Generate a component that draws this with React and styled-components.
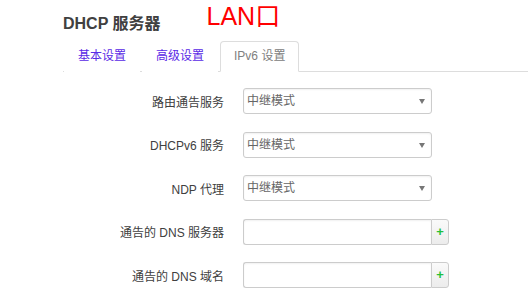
import React from "react";
import styled, { createGlobalStyle } from "styled-components";

const Global = createGlobalStyle`
  html, body { margin: 0; padding: 0; background: #fff; }
  body {
    font-family: "Liberation Sans", "Noto Sans CJK SC", sans-serif;
    color: #404040;
  }
`;

const Page = styled.div`
  width: 528px;
  height: 306px;
  overflow: hidden;
  padding-left: 63px;
  box-sizing: border-box;
`;

const Header = styled.div`
  display: flex;
  align-items: flex-start;
  height: 41px;
`;

const Title = styled.h2`
  margin: 16px 0 0 0;
  font-size: 16px;
  line-height: 16px;
  font-weight: bold;
  color: #404040;
`;

const Note = styled.span`
  margin: 4px 0 0 46px;
  font-size: 25px;
  line-height: 25px;
  color: #ff0000;
`;

const Tabs = styled.ul`
  display: flex;
  list-style: none;
  margin: 0;
  padding: 0 0 0 1px;
  height: 30px;
  border-bottom: 1px solid #ddd;
`;

const Tab = styled.li`
  height: 31px;
  box-sizing: border-box;
  margin: 0 2px -1px 0;
  padding: 0 13px;
  border: 1px solid ${(p) => (p.$active ? "#ddd" : "transparent")};
  border-bottom-color: transparent;
  border-radius: 4px 4px 0 0;
  background: #fff;
  font-size: 12px;
  line-height: 29px;
  color: ${(p) => (p.$active ? "#808080" : "#5a2ae6")};
  white-space: nowrap;
`;

const Form = styled.div`
  display: flex;
  flex-direction: column;
  gap: 17.5px;
  margin-top: 16px;
`;

const Row = styled.div`
  display: flex;
  align-items: center;
  height: 26px;
`;

const Label = styled.label`
  width: 161px;
  margin-right: 19px;
  text-align: right;
  font-size: 12px;
  color: #404040;
  white-space: nowrap;
`;

const Select = styled.div`
  position: relative;
  width: 189px;
  height: 26px;
  box-sizing: border-box;
  border: 1px solid #ccc;
  border-radius: 3px;
  box-shadow: inset 0 1px 2px rgba(0, 0, 0, 0.06);
  padding-left: 3px;
  font-size: 12px;
  line-height: 24px;
  color: #666;
`;

const Arrow = styled.span`
  position: absolute;
  right: 6px;
  top: 10px;
  width: 0;
  height: 0;
  border-left: 3px solid transparent;
  border-right: 3px solid transparent;
  border-top: 5px solid #777;
`;

const Group = styled.div`
  display: flex;
  height: 26px;
`;

const Input = styled.div`
  width: 188px;
  height: 26px;
  box-sizing: border-box;
  border: 1px solid #ccc;
  border-right: none;
  border-radius: 3px 0 0 3px;
  box-shadow: inset 0 1px 2px rgba(0, 0, 0, 0.06);
`;

const AddButton = styled.div`
  width: 18px;
  height: 26px;
  box-sizing: border-box;
  border: 1px solid #ccc;
  border-radius: 0 3px 3px 0;
  background: linear-gradient(#fafafa, #ececec);
  color: #22c03a;
  font-weight: bold;
  font-size: 13px;
  line-height: 23px;
  text-align: center;
`;

const selects = [
  ["路由通告服务", "中继模式"],
  ["DHCPv6 服务", "中继模式"],
  ["NDP 代理", "中继模式"],
];

const inputs = ["通告的 DNS 服务器", "通告的 DNS 域名"];

export default function App() {
  return (
    <Page>
      <Global />
      <Header>
        <Title>DHCP 服务器</Title>
        <Note>LAN口</Note>
      </Header>
      <Tabs>
        <Tab>基本设置</Tab>
        <Tab>高级设置</Tab>
        <Tab $active>IPv6 设置</Tab>
      </Tabs>
      <Form>
        {selects.map(([label, value]) => (
          <Row key={label}>
            <Label>{label}</Label>
            <Select>
              {value}
              <Arrow />
            </Select>
          </Row>
        ))}
        {inputs.map((label) => (
          <Row key={label}>
            <Label>{label}</Label>
            <Group>
              <Input />
              <AddButton>+</AddButton>
            </Group>
          </Row>
        ))}
      </Form>
    </Page>
  );
}
